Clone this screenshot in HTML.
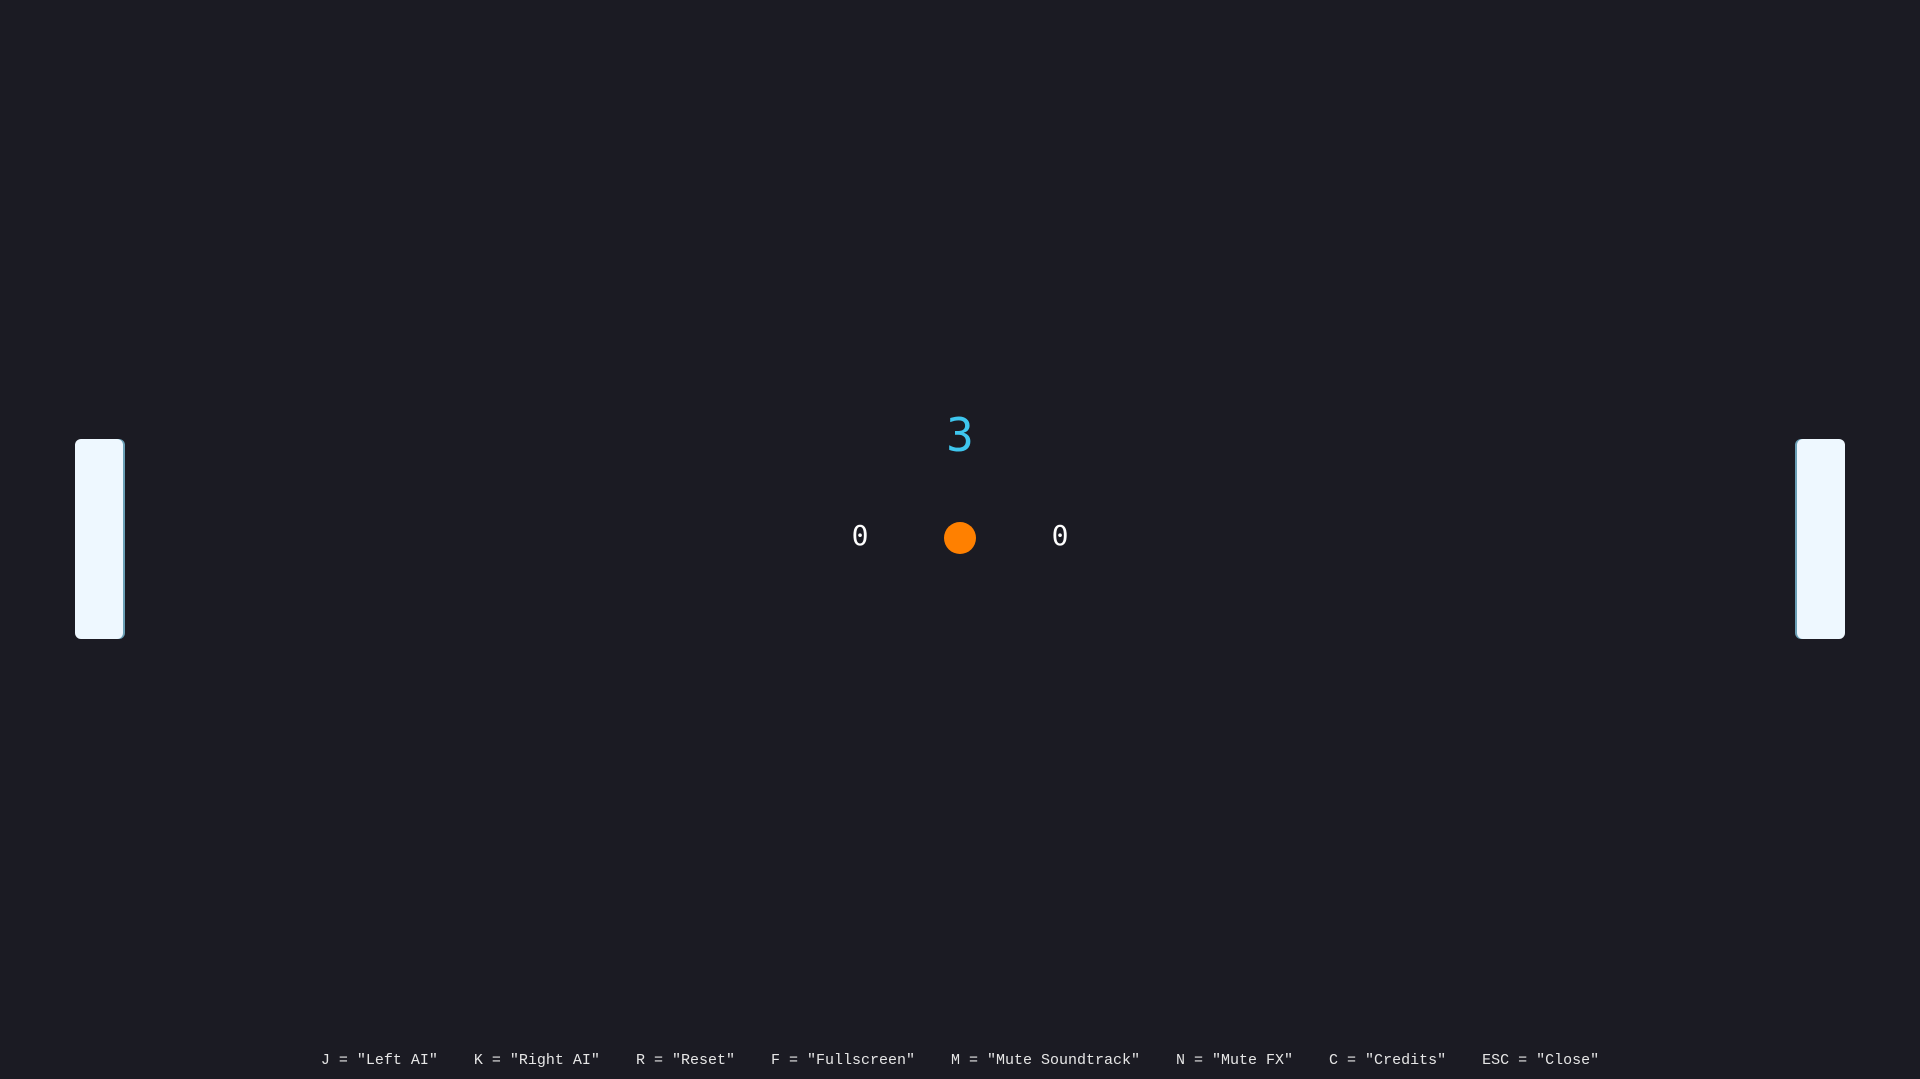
<!DOCTYPE html>
<html><head><meta charset="utf-8"><style>
html,body{margin:0;padding:0;width:1920px;height:1079px;background:#1b1b23;overflow:hidden;position:relative;font-family:"Liberation Mono",monospace}
.p{position:absolute;top:439px;width:48px;height:200px;background:#eef8ff;border-radius:6px}
#l{left:75px;box-shadow:2px 0 0 #6a9fb5}
#r{left:1797px;box-shadow:-2px 0 0 #6a9fb5}
#ball{position:absolute;left:944px;top:522px;width:32px;height:32px;border-radius:50%;background:#ff8000}
.t{position:absolute;line-height:1;white-space:pre}
#c{left:0;width:1920px;text-align:center;top:412px;font-size:46px;color:#3ec6ee;font-family:"DejaVu Sans Mono",monospace}
.s{font-size:28px;color:#fff;top:522px;width:60px;text-align:center;font-family:"DejaVu Sans Mono",monospace}
#f{left:0;width:1920px;text-align:center;top:1053px;font-size:15px;color:#e6e6e6}
</style></head><body>
<div class="p" id="l"></div>
<div class="p" id="r"></div>
<div class="t" id="c">3</div>
<div class="t s" style="left:830px">0</div>
<div class="t s" style="left:1030px">0</div>
<div id="ball"></div>
<div class="t" id="f">J = "Left AI"    K = "Right AI"    R = "Reset"    F = "Fullscreen"    M = "Mute Soundtrack"    N = "Mute FX"    C = "Credits"    ESC = "Close"</div>
</body></html>
